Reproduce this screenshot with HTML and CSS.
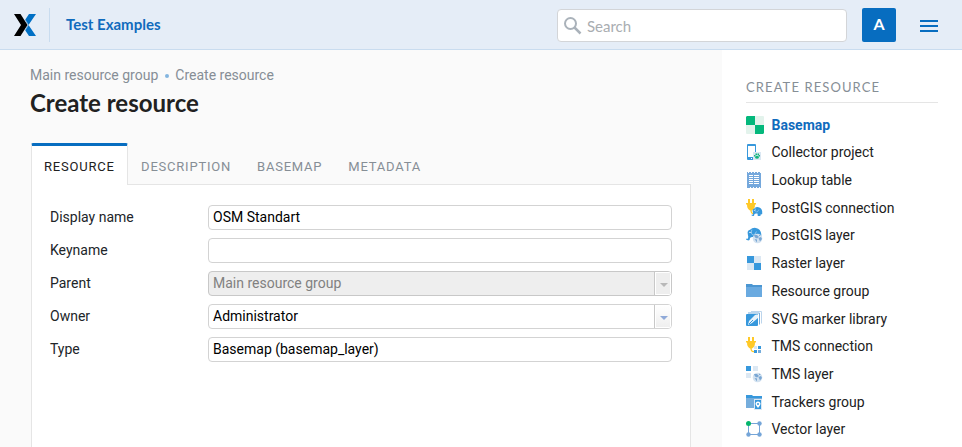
FILE: index.html
```html
<!DOCTYPE html>
<html lang="en">
<head>
<meta charset="utf-8">
<title>Create resource</title>
<link rel="stylesheet" href="styles.css">
</head>
<body>
<header class="header">
  <svg class="logo" viewBox="0 0 22 22"><path fill="#0070c5" d="M15 0h7l-7.500 11L22 22h-7l-4-6 3-5-3-5z"/><path fill="#000" d="M0 0h6.500l7 11-7 11H0l7-11z"/><path stroke="#e5edf7" stroke-width=".5" d="M11 5.500l3.500 5.500-3.500 5.500" fill="none"/></svg>
  <a class="site">Test Examples</a>
  <div class="search">
    <svg viewBox="0 0 18 18"><g fill="none" stroke="#aab2ba" stroke-width="2"><circle cx="6.500" cy="6.500" r="5.500"/><path stroke-width="2.500" d="M10.500 10.500l6 6"/></g></svg>
    <span>Search</span>
  </div>
  <div class="avatar">A</div>
  <div class="burger"><i></i><i></i><i></i></div>
</header>
<div class="layout">
  <main class="main">
    <nav class="crumbs"><a>Main resource group</a><i></i><a>Create resource</a></nav>
    <h1>Create resource</h1>
    <div class="tabs"><span class="tab active">RESOURCE</span><span class="tab">DESCRIPTION</span><span class="tab">BASEMAP</span><span class="tab">METADATA</span></div>
    <section class="panel">
      <div class="row"><label>Display name</label><div class="field">OSM Standart</div></div>
      <div class="row"><label>Keyname</label><div class="field"></div></div>
      <div class="row"><label>Parent</label><div class="field disabled">Main resource group<span class="arrow"></span></div></div>
      <div class="row"><label>Owner</label><div class="field">Administrator<span class="arrow"></span></div></div>
      <div class="row"><label>Type</label><div class="field">Basemap (basemap_layer)</div></div>
    </section>
  </main>
  <aside class="side">
    <h2>CREATE RESOURCE</h2>
    <ul>
      <li class="current"><svg viewBox="0 0 18 18"><rect width="18" height="18" rx="1" fill="#e3f3ec"/><path fill="#04b87c" d="M1 0h8v9H0V1zM9 9h9v8l-1 1H9z"/></svg>Basemap</li>
      <li><svg viewBox="0 0 18 18"><path fill="#3798dc" fill-rule="evenodd" d="M2 1h7q1 0 1 1v14q0 1-1 1H2q-1 0-1-1V2q0-1 1-1zm0 2v11h7V3z"/><path fill="#fff" d="M5 15h1v1H5z"/><rect x="7" y="9" width="8" height="8" fill="#dbe8f3"/><path fill="#12b57c" d="M9 15q0-2 2-2.500 2 .5 2 2.500-2 1.500-4 0zM8 12h1.500v1.500H8zM12.500 12H14v1.500h-1.500zM9.500 10.500H11V12H9.500zM11.500 10.500H13V12h-1.500z"/></svg>Collector project</li>
      <li><svg viewBox="0 0 18 18"><path fill="#75a8dc" d="M1 1h1v1h1V1h2v1h1V1h2v1h1V1h2v1h1V1h2v1h1v15h-1v-1h-1v1h-2v-1h-1v1H8v-1H7v1H5v-1H4v1H1z"/><path stroke="#fff" stroke-width="1" d="M3 4.500h4M8 4.500h5M3 6.500h4M8 6.500h5M3 8.500h4M8 8.500h5M3 10.500h4M8 10.500h5M3 12.500h4M8 12.500h5"/></svg>Lookup table</li>
      <li><svg viewBox="0 0 18 18"><use href="#plug"/><use href="#elephant" transform="translate(5.500 7.500) scale(.63)"/></svg>PostGIS connection</li>
      <li><svg viewBox="0 0 18 18"><use href="#elephant" transform="translate(0 1) scale(.9)"/><use href="#globe"/></svg>PostGIS layer</li>
      <li><svg viewBox="0 0 18 18"><path fill="#dce8f3" d="M1 2h14v14H1z"/><path fill="#3798dc" d="M1 2h7v7H1zM8 9h7v7H8z"/></svg>Raster layer</li>
      <li><svg viewBox="0 0 18 18"><path fill="#4b96d2" d="M0 2h6l1 1h9v2H0z"/><path fill="#6aaae0" d="M0 5h16v10H0z"/></svg>Resource group</li>
      <li><svg viewBox="0 0 18 18"><path fill="none" stroke="#bcd5ec" d="M5 1.500h10.500v12"/><path fill="none" stroke="#75addc" d="M2 3h11.500v11.500"/><rect y="4" width="12" height="12" rx="1" fill="#3798dc"/><path fill="#e8f3fb" d="M2 15l1-4 6-6q2-1 3 0v3l-6 5z"/><path stroke="#3798dc" stroke-width="1" d="M3 14l4-4"/></svg>SVG marker library</li>
      <li><svg viewBox="0 0 18 18"><use href="#plug"/><path fill="#3798dc" d="M12 9h3v3h-3zM8 13h3v3H8z"/><path fill="#d6e5f2" d="M8 9h3v3H8z"/><path fill="#75addc" d="M12 13h3v3h-3z"/></svg>TMS connection</li>
      <li><svg viewBox="0 0 18 18"><path fill="#3798dc" d="M0 1h5v5H0z"/><path fill="#dce8f3" d="M7 1h5v5H7zM0 8h5v5H0z"/><use href="#globe"/></svg>TMS layer</li>
      <li><svg viewBox="0 0 18 18"><path fill="#3798dc" d="M0 2h6l1 1h9v3H0z"/><path fill="#75addc" d="M0 5h16v10H0z"/><rect x="8.500" y="6.500" width="7" height="10" fill="#3798dc" stroke="#dce8f3"/><path fill="#fff" d="M12 15q-2.500-3-2.500-4a2.500 2.500 0 015 0q0 1-2.500 4z"/><circle cx="12" cy="11" r="1" fill="#3798dc"/></svg>Trackers group</li>
      <li><svg viewBox="0 0 18 18"><path fill="none" stroke="#75a5d8" d="M2.500 3.500h11v11h-11z"/><g fill="#75a5d8"><circle cx="13.500" cy="3.500" r="2.200"/><circle cx="2.500" cy="14.500" r="2.200"/><circle cx="13.500" cy="14.500" r="2.200"/></g><circle cx="2.500" cy="3.500" r="2.500" fill="#04b56c"/></svg>Vector layer</li>
    </ul>
  </aside>
</div>
<svg class="defs">
  <g id="plug"><path fill="#ffc928" d="M2 0h2v4H2zM6 0h2v4H6zM0 4h10v1.500H9q0 4.500-3 6H4q-3-1.500-3-6H0z"/><path fill="none" stroke="#ffc928" stroke-width="1.300" d="M5 11q0 4 3 3.500"/></g>
  <g id="elephant"><path fill="#3798dc" d="M2 8Q1 4 4.500 3 7 .5 11 1q5.500 1 6 7v4q-1 1-2 0l-1 3h-4l-.5-4H7q-3 0-3 3.500-2 1-4-.5v-1h2q1-2 0-5z"/><path fill="none" stroke="#a9d2f0" stroke-width=".9" d="M6.500 3q-1.500 5 1.500 6 3-1 3.500-4"/><circle cx="4.500" cy="6" r=".8" fill="#fff"/></g>
  <g id="globe"><circle cx="11.500" cy="12.500" r="4.800" fill="#d3e2f0"/><path fill="#7aa7d4" d="M8 9l3 0 2 2-2 1.500-2-1zM12.500 12l2.500-1 1 2-2 2.500zM13 8.500l2 1.500-2 0zM8.500 13l2.500.5v3z"/></g>
</svg>
</body>
</html>
```
FILE: styles.css
```css
* { box-sizing: border-box; }
body { margin: 0; height: 447px; overflow: hidden; background: #fff; color: #212529; font: 14px/20px Roboto, sans-serif; }
.header { display: flex; align-items: center; height: 50px; padding: 0 24px 0 14px; background: #e5edf7; border-bottom: 1px solid #c9dcef; }
.logo { width: 22px; height: 22px; }
.site { height: 34px; margin-left: 13px; padding-left: 16px; border-left: 1px solid #c9dcef; color: #106bbd; font: bold 15px/32px Lato, sans-serif; }
.search { display: flex; align-items: center; width: 290px; height: 33px; margin: 1px 15px 0 auto; padding: 0 6px; border: 1px solid #d3d5d8; border-radius: 4px; background: #fff; color: #a9adb1; font: 15px/20px Lato, sans-serif; }
.search svg { width: 18px; height: 18px; margin: 1px 5px 0 0; }
.search span { padding-top: 1px; }
.avatar { width: 34px; height: 34px; border-radius: 2px; background: #076dc0; color: #fff; font: bold 16px/32px Lato, sans-serif; text-align: center; }
.burger { display: grid; gap: 3px; width: 18px; margin: 2px 0 0 24px; }
.burger i { height: 2px; background: #076dc0; }
.layout { display: flex; height: 397px; }
.main { display: flex; flex-direction: column; width: 722px; padding: 15px 31px 0 30px; background: #fafafa; }
.crumbs { display: flex; align-items: center; height: 20px; color: #868e96; }
.crumbs i { width: 4px; height: 4px; margin: 2px 6px 0 7px; border-radius: 50%; background: #83b5df; }
h1 { margin: 2px 0 0; font: bold 24px/31px Lato, sans-serif; color: #212121; }
.tabs { display: flex; height: 42px; margin: 25px 0 -1px 1px; position: relative; }
.tab { padding: 14px 13px 0; color: #868e96; font-size: 13px; letter-spacing: .78px; }
.tab.active { padding: 11px 12.5px 0 12px; border: solid #e5e5e5; border-width: 3px 1px 0; border-top-color: #076dc0; border-radius: 2px 2px 0 0; background: #fff; color: #212121; }
.panel { flex: 1; margin-left: 1px; padding: 20px 18px 0; border: 1px solid #e5e5e5; border-bottom: 0; background: #fff; }
.row { display: flex; height: 33px; line-height: 25px; }
.row label { width: 158px; }
.field { display: flex; justify-content: space-between; flex: 1; height: 25px; padding-left: 4px; border: 1px solid #d3d3d3; border-radius: 4px; line-height: 23px; color: #000; overflow: hidden; }
.disabled { background: #eee; border-color: #c8c8c8; color: #818181; }
.arrow { display: flex; align-items: center; justify-content: center; width: 17px; border-left: 1px solid #c8c8c8; box-shadow: inset 0 0 0 1px #fff; background: linear-gradient(#fff, #eee); }
.arrow::before { content: ""; margin: 2px 0 0 2px; border: solid transparent; border-width: 4px 4px 0; border-top-color: #8fa9d8; }
.disabled .arrow { background: #eee; }
.disabled .arrow::before { border-top-color: #b8b8b8; }
.side { width: 240px; padding: 27px 24px 0 24px; }
h2 { height: 26px; margin: 0 0 7.880px; border-bottom: 1px solid #e5e5e5; color: #868e96; font: 13px/20px Lato, sans-serif; letter-spacing: 1.1px; white-space: nowrap; }
ul { margin: 0; padding: 0; list-style: none; }
li { display: flex; align-items: center; height: 27.7px; color: #212121; }
li svg { width: 18px; height: 18px; margin-right: 7.500px; }
.current { color: #106bbd; font-weight: bold; }
.defs { display: none; }
```
